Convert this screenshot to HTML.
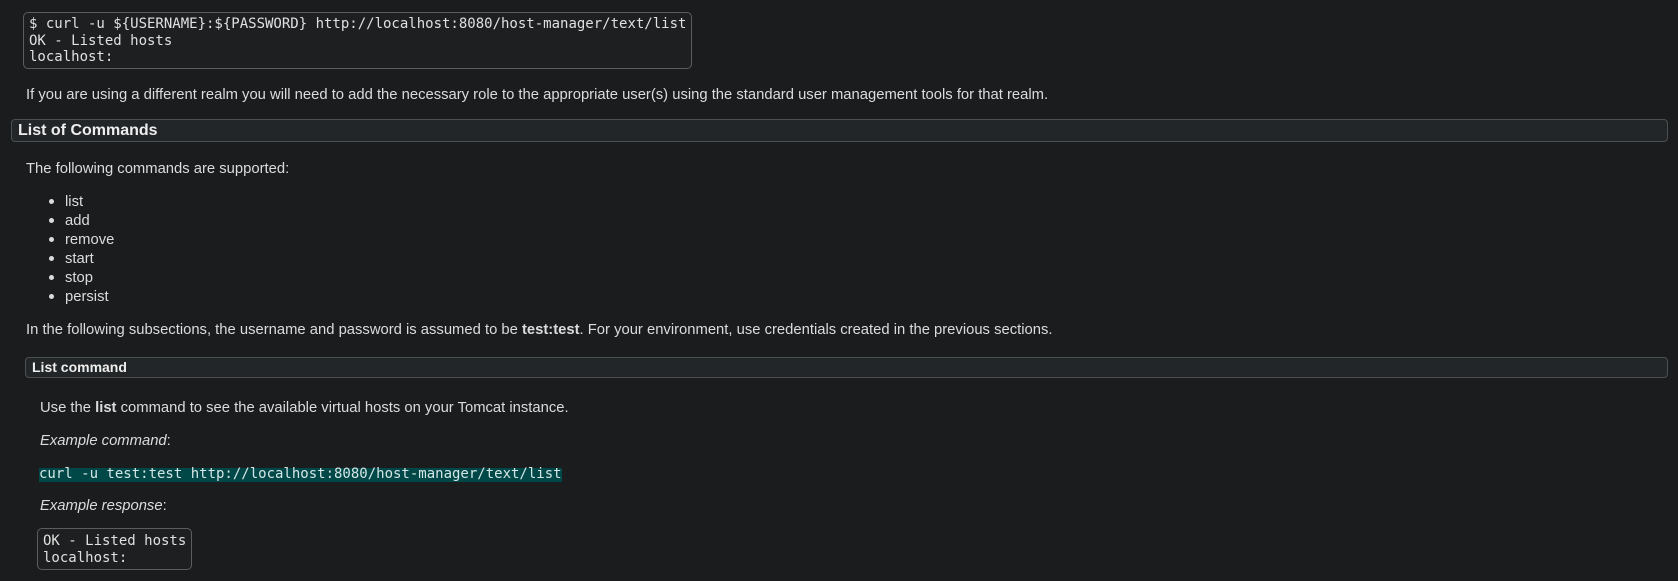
<!DOCTYPE html>
<html><head><meta charset="utf-8"><style>
html,body{margin:0;padding:0;background:#1b1c1e;width:1678px;height:581px;overflow:hidden;}
body{position:relative;font-family:"Liberation Sans",sans-serif;color:#dcdcdc;font-size:14.8px;}
.a{position:absolute;white-space:nowrap;line-height:20px;}
pre{margin:0;position:absolute;font-family:"DejaVu Sans Mono","Liberation Mono",monospace;font-size:14px;line-height:16.5px;color:#e0e0e0;border:1px solid #5a5d60;border-radius:5px;background:#1e1f21;box-sizing:border-box;}
.h{position:absolute;background:#232628;border:1px solid #4a4f51;border-radius:4px;box-sizing:border-box;font-weight:bold;color:#eee;white-space:nowrap;}
.b{position:absolute;width:5px;height:5px;border-radius:50%;background:#dcdcdc;}
i{font-style:italic;}
</style></head><body>
<pre style="left:23px;top:12px;width:669px;height:57px;padding:3px 0 0 5px;">$ curl -u ${USERNAME}:${PASSWORD} http://localhost:8080/host-manager/text/list
OK - Listed hosts
localhost:</pre>
<div class="a" style="left:26px;top:85px;">If you are using a different realm you will need to add the necessary role to the appropriate user(s) using the standard user management tools for that realm.</div>
<div class="h" style="left:11px;top:119px;width:1657px;height:23px;padding-left:6px;font-size:16px;line-height:21px;">List of Commands</div>
<div class="a" style="left:26px;top:159px;">The following commands are supported:</div>
<div class="b" style="left:49px;top:199px;"></div><div class="a" style="left:65px;top:192px;">list</div>
<div class="b" style="left:49px;top:218px;"></div><div class="a" style="left:65px;top:211px;">add</div>
<div class="b" style="left:49px;top:237px;"></div><div class="a" style="left:65px;top:230px;">remove</div>
<div class="b" style="left:49px;top:256px;"></div><div class="a" style="left:65px;top:249px;">start</div>
<div class="b" style="left:49px;top:275px;"></div><div class="a" style="left:65px;top:268px;">stop</div>
<div class="b" style="left:49px;top:294px;"></div><div class="a" style="left:65px;top:287px;">persist</div>
<div class="a" style="left:26px;top:320px;">In the following subsections, the username and password is assumed to be <b>test:test</b>. For your environment, use credentials created in the previous sections.</div>
<div class="h" style="left:25px;top:357px;width:1643px;height:21px;padding-left:6px;font-size:14px;line-height:19px;">List command</div>
<div class="a" style="left:40px;top:398px;">Use the <b>list</b> command to see the available virtual hosts on your Tomcat instance.</div>
<div class="a" style="left:40px;top:431px;"><i>Example command</i>:</div>
<div style="position:absolute;left:39px;top:468px;height:14px;width:523px;background:#004848;"></div>
<div style="position:absolute;left:39px;top:466px;font-family:'DejaVu Sans Mono',monospace;font-size:14px;line-height:17px;color:#d6e6e6;white-space:nowrap;">curl -u test:test http://localhost:8080/host-manager/text/list</div>
<div class="a" style="left:40px;top:496px;"><i>Example response</i>:</div>
<pre style="left:37px;top:528px;width:155px;height:42px;padding:4px 0 0 5px;">OK - Listed hosts
localhost:</pre>
</body></html>
